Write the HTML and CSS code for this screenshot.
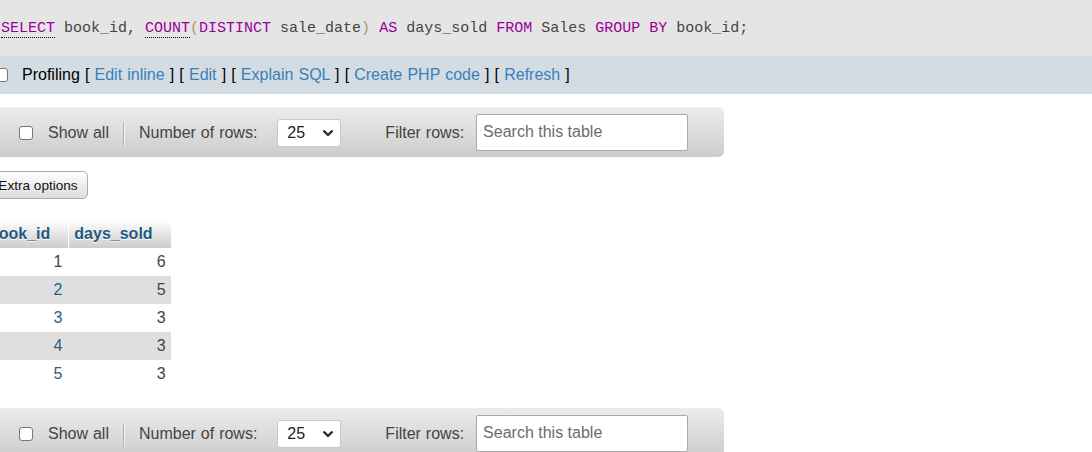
FILE: index.html
```html
<!DOCTYPE html>
<html>
<head>
<meta charset="utf-8">
<link rel="stylesheet" href="styles.css">
</head>
<body>
<div class="page">
  <div class="sql"><code><a class="kw doc">SELECT</a> book_id, <a class="kw doc">COUNT</a><span class="br">(</span><span class="kw">DISTINCT</span> sale_date<span class="br">)</span> <span class="kw">AS</span> days_sold <span class="kw">FROM</span> Sales <span class="kw">GROUP</span> <span class="kw">BY</span> book_id;</code></div>
  <div class="tools">
    <input type="checkbox" class="cb prof-cb">
    <span class="tool-text">Profiling [ <a class="lnk">Edit inline</a> ] [ <a class="lnk">Edit</a> ] [ <a class="lnk">Explain SQL</a> ] [ <a class="lnk">Create PHP code</a> ] [ <a class="lnk">Refresh</a> ]</span>
  </div>

  <div class="navbar">
    <input type="checkbox" class="cb">
    <span class="lbl">Show all</span>
    <span class="sep"></span>
    <span class="lbl">Number of rows:</span>
    <div class="select"><span>25</span><svg width="12" height="8" viewBox="0 0 12 8"><path d="M1.5 1.5 L6 6 L10.5 1.5" fill="none" stroke="#222" stroke-width="2.2"/></svg></div>
    <span class="lbl filter">Filter rows:</span>
    <div class="search">Search this table</div>
  </div>

  <button class="extra">Extra options</button>

  <table class="results">
    <thead>
      <tr><th>book_id</th><th>days_sold</th></tr>
    </thead>
    <tbody>
      <tr><td>1</td><td>6</td></tr>
      <tr><td class="blue">2</td><td>5</td></tr>
      <tr><td class="blue">3</td><td>3</td></tr>
      <tr><td class="blue">4</td><td>3</td></tr>
      <tr><td class="blue">5</td><td>3</td></tr>
    </tbody>
  </table>

  <div class="navbar bottom">
    <input type="checkbox" class="cb">
    <span class="lbl">Show all</span>
    <span class="sep"></span>
    <span class="lbl">Number of rows:</span>
    <div class="select"><span>25</span><svg width="12" height="8" viewBox="0 0 12 8"><path d="M1.5 1.5 L6 6 L10.5 1.5" fill="none" stroke="#222" stroke-width="2.2"/></svg></div>
    <span class="lbl filter">Filter rows:</span>
    <div class="search">Search this table</div>
  </div>
</div>
</body>
</html>
```

FILE: styles.css
```css
html, body {
  margin: 0;
  padding: 0;
  background: #fff;
  overflow: hidden;
}
body {
  font-family: "Liberation Sans", Arial, sans-serif;
  font-size: 16px;
  color: #444;
}
.page {
  margin-left: -17px;
  width: calc(100% + 17px);
}
.sql {
  background: #e5e5e5;
  height: 56px;
  display: flex;
  align-items: center;
  padding-left: 18px;
  box-sizing: border-box;
}
.sql code {
  font-family: "Liberation Mono", "DejaVu Sans Mono", monospace;
  font-size: 15px;
  color: #444;
  white-space: pre;
}
.kw { color: #990099; }
.doc {
  text-decoration: none;
  border-bottom: 1px dotted #000;
}
.br { color: #b09a6a; }
.tools {
  background: #d3dce3;
  height: 38px;
  display: flex;
  align-items: center;
  color: #000;
}
.cb {
  appearance: none;
  -webkit-appearance: none;
  width: 14px;
  height: 14px;
  margin: 0;
  border: 1px solid #767676;
  border-radius: 3px;
  background: #fff;
  box-sizing: border-box;
  flex: none;
}
.prof-cb { margin-left: 11px; margin-right: 14px; }
.tool-text { white-space: pre; word-spacing: 0.7px; }
.lnk { color: #3a80b8; text-decoration: none; }

.navbar {
  margin-top: 13px;
  width: 741px;
  height: 50px;
  box-sizing: border-box;
  background: linear-gradient(#ececec, #cccccc);
  border-radius: 0 6px 6px 0;
  display: flex;
  align-items: center;
  padding-left: 36px;
  padding-top: 1px;
  color: #444;
}
.navbar .lbl { white-space: nowrap; word-spacing: 0.5px; }
.navbar .cb { margin-right: 15px; }
.sep {
  width: 1px;
  height: 24px;
  background: #b0b0b0;
  border-right: 1px solid #f4f4f4;
  margin: 2px 14px 0 14px;
}
.select {
  margin-left: 20px;
  width: 64px;
  height: 28px;
  box-sizing: border-box;
  background: #fff;
  border: 1px solid #c8c8c8;
  border-radius: 3px;
  display: flex;
  align-items: center;
  justify-content: space-between;
  padding: 0 6px 0 9px;
  color: #222;
}
.select svg { display: block; margin-top: 1px; }
.filter { margin-left: 44px; }
.search {
  margin-left: 12px;
  width: 212px;
  height: 37px;
  box-sizing: border-box;
  background: #fff;
  border: 1px solid #aaa;
  border-radius: 2px;
  display: flex;
  align-items: center;
  padding-left: 6px;
  color: #6c6c6c;
  margin-top: -1px;
}
.navbar.bottom { margin-top: 20px; }

.extra {
  display: block;
  margin: 14px 0 0 5px;
  height: 28px;
  width: 100px;
  padding: 0;
  font-family: "Liberation Sans", Arial, sans-serif;
  font-size: 13.6px;
  color: #111;
  background: linear-gradient(#ffffff, #dcdcdc);
  border: 1px solid #aaa;
  border-radius: 5px;
}

.results {
  margin-top: 21px;
  border-collapse: separate;
  border-spacing: 0;
}
.results th {
  height: 28px;
  box-sizing: border-box;
  padding: 0 18px 0 5px;
  text-align: left;
  font-weight: bold;
  color: #235a81;
  background: linear-gradient(#ffffff, #cccccc);
  border-left: 1px solid #fff;
  text-shadow: 0 1px 0 #fff;
}
.results th:first-child { border-left: 0; padding-left: 6px; }
.results td {
  height: 28px;
  box-sizing: border-box;
  padding: 0 5px;
  text-align: right;
  color: #444;
}
.results td:first-child { padding-right: 6px; }
.results tbody tr:nth-child(even) td { background: #dfdfdf; }
.results td.blue { color: #2d5d85; }
```
